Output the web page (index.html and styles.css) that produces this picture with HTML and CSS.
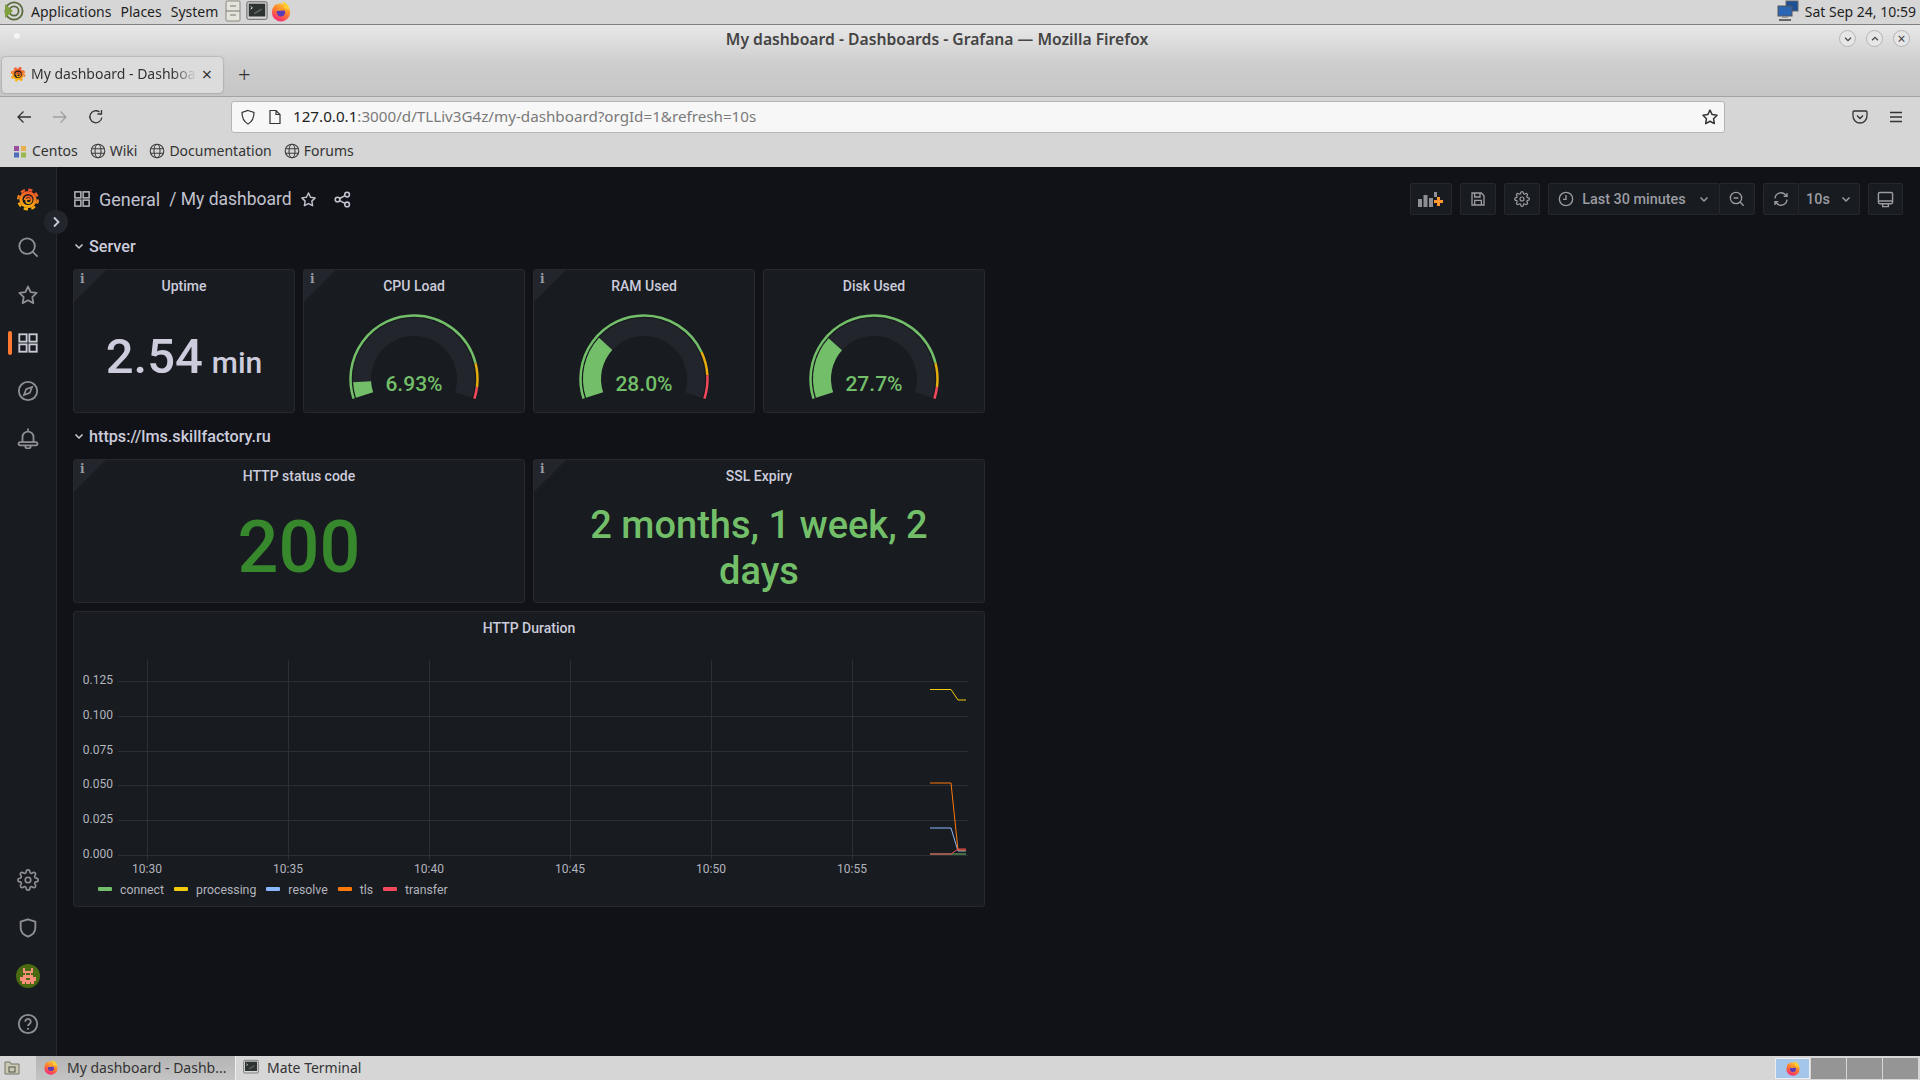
FILE: index.html
```html
<!DOCTYPE html>
<html>
<head>
    <title>My dashboard - Dashboards - Grafana</title>
    <link rel="stylesheet" href="styles.css">
</head>
<body>
    <svg class="defs" width="0" height="0">
        <defs>
            <linearGradient id="grafGrad" x1="0.6" y1="0" x2="0.4" y2="1">
                <stop offset="0" stop-color="#f0512a"/>
                <stop offset="1" stop-color="#fbb80f"/>
            </linearGradient>
            <linearGradient id="foxGrad" x1="0.8" y1="0" x2="0.3" y2="1">
                <stop offset="0" stop-color="#ffd43a"/>
                <stop offset="0.5" stop-color="#ff7a2f"/>
                <stop offset="1" stop-color="#f5267c"/>
            </linearGradient>
            <symbol id="grafana" viewBox="0 0 24 24">
                <circle cx="12" cy="12.5" r="8.6" fill="url(#grafGrad)"/>
                <circle cx="12" cy="12.5" r="9.8" fill="none" stroke="url(#grafGrad)" stroke-width="2.4" stroke-dasharray="4.2 3.5"/>
                <circle cx="12" cy="12.5" r="5.6" fill="#181b1f"/>
                <path d="M8.8 13a3.4 3.4 0 1 1 3.6 3.2 2.3 2.3 0 0 1-2-3.300 2 2 0 0 1 3.400-.2" fill="none" stroke="url(#grafGrad)" stroke-width="1.8"/>
            </symbol>
            <symbol id="firefox" viewBox="0 0 24 24">
                <circle cx="12" cy="13.5" r="10" fill="url(#foxGrad)"/>
                <path d="M14 1c3 2 7 5 7.500 10L15 9c.5-3 0-5-1-8z" fill="#ffcf2e"/>
                <path d="M2.500 10c1-3 3-5 5-5.500L7 8z" fill="#ff8a2a"/>
                <circle cx="12" cy="13.500" r="4.600" fill="#5b3bb8"/>
                <path d="M7.400 12c1-3.500 5-4.500 8-2.500l3 3.500c-1-1-3-1.500-5-1.500-2 0-4 .5-6 .5z" fill="#ff9a2a"/>
            </symbol>
            <symbol id="terminal" viewBox="0 0 24 24">
                <rect x="1" y="2" width="22" height="19" rx="1.500" fill="#d8d8d8" stroke="#555"/>
                <rect x="3" y="4" width="18" height="14" fill="#2c3331"/>
                <path d="M5 7l2 1.500L5 10" fill="none" stroke="#eee"/>
                <path d="M9 15l8-5" stroke="#59625f" stroke-width="2"/>
            </symbol>
            <symbol id="globe" viewBox="0 0 16 16">
                <g fill="none" stroke="#3d3d3d" stroke-width="1.100">
                    <circle cx="8" cy="8" r="6.800"/>
                    <ellipse cx="8" cy="8" rx="3" ry="6.800"/>
                    <path d="M1.500 5.800h13M1.500 10.200h13"/>
                </g>
            </symbol>
            <symbol id="star" viewBox="0 0 24 24">
                <path d="M12 2.800l2.900 6 6.500.9-4.700 4.600 1.100 6.500-5.800-3.100-5.800 3.100 1.100-6.500-4.700-4.600 6.500-.9z" fill="none" stroke="currentColor" stroke-width="2" stroke-linejoin="round"/>
            </symbol>
            <symbol id="grid" viewBox="0 0 24 24">
                <g fill="none" stroke="currentColor" stroke-width="2">
                    <rect x="2.500" y="2.500" width="8" height="8"/>
                    <rect x="13.500" y="2.500" width="8" height="8"/>
                    <rect x="2.500" y="13.500" width="8" height="8"/>
                    <rect x="13.500" y="13.500" width="8" height="8"/>
                </g>
            </symbol>
            <symbol id="gear" viewBox="0 0 24 24">
                <g fill="none" stroke="currentColor" stroke-width="1.800">
                    <circle cx="12" cy="12" r="3"/>
                    <path d="M19.400 15a1.650 1.650 0 0 0 .33 1.820l.06.06a2 2 0 0 1 0 2.830 2 2 0 0 1-2.830 0l-.06-.06a1.650 1.650 0 0 0-1.820-.33 1.650 1.650 0 0 0-1 1.510V21a2 2 0 0 1-2 2 2 2 0 0 1-2-2v-.09A1.650 1.650 0 0 0 9 19.400a1.650 1.650 0 0 0-1.820.33l-.06.06a2 2 0 0 1-2.830 0 2 2 0 0 1 0-2.830l.06-.06a1.650 1.650 0 0 0 .33-1.820 1.650 1.650 0 0 0-1.510-1H3a2 2 0 0 1-2-2 2 2 0 0 1 2-2h.09A1.650 1.650 0 0 0 4.600 9a1.650 1.650 0 0 0-.33-1.820l-.06-.06a2 2 0 0 1 0-2.830 2 2 0 0 1 2.830 0l.06.06a1.650 1.650 0 0 0 1.820.33H9a1.650 1.650 0 0 0 1-1.510V3a2 2 0 0 1 2-2 2 2 0 0 1 2 2v.09a1.650 1.650 0 0 0 1 1.510 1.650 1.650 0 0 0 1.820-.33l.06-.06a2 2 0 0 1 2.830 0 2 2 0 0 1 0 2.830l-.06.06a1.650 1.650 0 0 0-.33 1.820V9a1.650 1.650 0 0 0 1.510 1H21a2 2 0 0 1 2 2 2 2 0 0 1-2 2h-.09a1.650 1.650 0 0 0-1.510 1z"/>
                </g>
            </symbol>
            <symbol id="chevron" viewBox="0 0 12 12">
                <path d="M2.500 4.500L6 8l3.500-3.500" fill="none" stroke="currentColor" stroke-width="1.500"/>
            </symbol>
        </defs>
    </svg>

    <div class="top-panel">
        <svg class="mate-logo" width="20" height="20" viewBox="0 0 20 20"><g fill="none" stroke="#5a6b3c" stroke-width="1.800"><circle cx="10" cy="10" r="8.600"/><circle cx="10" cy="10" r="4.600"/></g><path d="M1 3l8 7-8 7z" fill="#7fa03c"/></svg>
        <span class="panel-menu">Applications</span>
        <span class="panel-menu">Places</span>
        <span class="panel-menu">System</span>
        <svg class="launcher-files" width="16" height="22" viewBox="0 0 16 22"><rect x="1" y="1" width="14" height="20" rx="1" fill="#e4e4dc" stroke="#8a8a80"/><path d="M1 11h14M5 6h6M5 15h6" stroke="#77776e"/></svg>
        <svg class="launcher-term" width="22" height="22"><use href="#terminal"/></svg>
        <svg class="launcher-fox" width="22" height="22"><use href="#firefox"/></svg>
        <span class="panel-spacer"></span>
        <svg class="net-icon" width="22" height="22" viewBox="0 0 22 22"><rect x="9" y="1" width="12" height="10" fill="#1d4f96" stroke="#666"/><rect x="1" y="6" width="14" height="10" fill="#2a66b5" stroke="#555"/><path d="M5 17h6" stroke="#888" stroke-width="1.500"/><path d="M2 20h12" stroke="#666" stroke-width="2"/></svg>
        <span class="panel-clock">Sat Sep 24, 10:59</span>
    </div>

    <div class="titlebar">
        <div class="title-row">
            <span class="title-dot"></span>
            <span class="window-title">My dashboard - Dashboards - Grafana — Mozilla Firefox</span>
            <div class="wm-buttons">
                <span class="wm-btn"><svg width="10" height="10"><use href="#chevron"/></svg></span>
                <span class="wm-btn wm-up"><svg width="10" height="10"><use href="#chevron"/></svg></span>
                <span class="wm-btn wm-close">×</span>
            </div>
        </div>
        <div class="tab-row">
            <div class="tab">
                <svg width="16" height="16"><use href="#grafana"/></svg>
                <span class="tab-title">My dashboard - Dashboa</span>
                <span class="tab-close">×</span>
            </div>
            <span class="new-tab">+</span>
        </div>
    </div>

    <div class="navbar">
        <svg class="nav-btn" width="16" height="16" viewBox="0 0 16 16"><path d="M15 8H2M7.500 2.500L2 8l5.500 5.500" fill="none" stroke="#333" stroke-width="1.300"/></svg>
        <svg class="nav-btn" width="16" height="16" viewBox="0 0 16 16"><path d="M1 8h13M8.500 2.500L14 8l-5.500 5.500" fill="none" stroke="#a0a0a0" stroke-width="1.300"/></svg>
        <svg class="nav-btn" width="16" height="16" viewBox="0 0 16 16"><path d="M13.800 8.500A6 6 0 1 1 11.500 3M13.500 1v4h-4" fill="none" stroke="#333" stroke-width="1.300"/></svg>
        <div class="urlbar">
            <svg width="16" height="16" viewBox="0 0 16 16"><path d="M8 1.500l6 2c0 5-1.500 9-6 11.500-4.500-2.500-6-6.500-6-11.500z" fill="none" stroke="#333" stroke-width="1.200"/></svg>
            <svg class="url-page" width="14" height="16" viewBox="0 0 14 16"><path d="M2 1.500h6l4 4v9H2zM8 1.500v4h4" fill="none" stroke="#333" stroke-width="1.200"/></svg>
            <span class="url-text"><b>127.0.0.1</b>:3000/d/TLLiv3G4z/my-dashboard?orgId=1&amp;refresh=10s</span>
            <svg class="url-star" width="18" height="18"><use href="#star"/></svg>
        </div>
        <svg class="pocket" width="16" height="16" viewBox="0 0 16 16"><path d="M2 2h12a1 1 0 0 1 1 1v4a7 7 0 0 1-14 0V3a1 1 0 0 1 1-1zM5 6.500l3 3 3-3" fill="none" stroke="#333" stroke-width="1.300"/></svg>
        <svg class="hamburger" width="14" height="14" viewBox="0 0 14 14"><path d="M1 2.500h12M1 7h12M1 11.500h12" stroke="#333" stroke-width="1.300"/></svg>
    </div>

    <div class="bookmarks">
        <span class="bookmark">
            <svg width="16" height="16" viewBox="0 0 16 16"><rect x="2" y="3" width="5" height="5" fill="#9a4f9e"/><rect x="9" y="3" width="5" height="5" fill="#e8b04a"/><rect x="2" y="9.500" width="5" height="5" fill="#4e6fb5"/><rect x="9" y="9.500" width="5" height="5" fill="#9ab84e"/></svg>
            Centos
        </span>
        <span class="bookmark"><svg width="16" height="16"><use href="#globe"/></svg>Wiki</span>
        <span class="bookmark"><svg width="16" height="16"><use href="#globe"/></svg>Documentation</span>
        <span class="bookmark"><svg width="16" height="16"><use href="#globe"/></svg>Forums</span>
    </div>

    <div class="grafana">
        <nav class="sidebar">
            <div class="side-group">
                <a class="side-item"><svg width="24" height="24"><use href="#grafana"/></svg></a>
                <a class="side-item"><svg width="22" height="22" viewBox="0 0 24 24"><path d="M11 2.500a8.500 8.500 0 1 0 0 17 8.500 8.500 0 0 0 0-17zM17.500 17.500l5 5" fill="none" stroke="currentColor" stroke-width="2"/></svg></a>
                <a class="side-item"><svg width="22" height="22"><use href="#star"/></svg></a>
                <a class="side-item active"><svg width="22" height="22"><use href="#grid"/></svg></a>
                <a class="side-item"><svg width="22" height="22" viewBox="0 0 24 24"><circle cx="12" cy="12" r="10" fill="none" stroke="currentColor" stroke-width="2"/><path d="M16.500 7.500l-2.500 6.500-6.500 2.500 2.500-6.500z" fill="none" stroke="currentColor" stroke-width="1.800"/></svg></a>
                <a class="side-item side-bell"><svg width="22" height="22" viewBox="0 0 24 24"><path d="M12 1.500v2.500M6 16v-5a6 6 0 0 1 12 0v5M3.500 16.500h17a1.500 1.500 0 0 1 0 3.500h-17a1.500 1.500 0 0 1 0-3.500zM9 20.500a3 3 0 0 0 6 0" fill="none" stroke="currentColor" stroke-width="2"/></svg></a>
            </div>
            <div class="side-group">
                <a class="side-item"><svg width="22" height="22"><use href="#gear"/></svg></a>
                <a class="side-item"><svg width="22" height="22" viewBox="0 0 24 24"><path d="M12 2.500l8 2.500v7c0 4.500-3 7.500-8 9.500-5-2-8-5-8-9.500V5z" fill="none" stroke="currentColor" stroke-width="2"/></svg></a>
                <a class="side-item">
                    <svg width="24" height="24" viewBox="0 0 24 24">
                        <circle cx="12" cy="12" r="12" fill="#4a6a12"/>
                        <path d="M7 4h2v3h6V4h2v5h-2v2h2v2h3v4h-2v3h-3v-2h-1v2h-4v-2H9v2H6v-3H4v-4h3v-2h2V9H7z" fill="#f9907c"/>
                        <path d="M10 9h4v2h-4zM10 14h4v2h-4z" fill="#4a6a12"/>
                    </svg>
                </a>
                <a class="side-item"><svg width="22" height="22" viewBox="0 0 24 24"><circle cx="12" cy="12" r="10" fill="none" stroke="currentColor" stroke-width="2"/><path d="M9 9.500a3 3 0 1 1 4.500 2.600c-1 .6-1.500 1-1.500 2.200" fill="none" stroke="currentColor" stroke-width="2"/><circle cx="12" cy="17.300" r="1.200" fill="currentColor"/></svg></a>
            </div>
            <span class="side-toggle"><svg width="12" height="12" viewBox="0 0 12 12"><path d="M4 1.500L8.500 6 4 10.500" fill="none" stroke="currentColor" stroke-width="1.800"/></svg></span>
        </nav>

        <main class="main">
            <header class="dash-header">
                <svg class="crumb-icon" width="18" height="18"><use href="#grid"/></svg>
                <span class="crumb">General</span>
                <span class="crumb crumb-sep">/ My dashboard</span>
                <svg class="head-star" width="17" height="17"><use href="#star"/></svg>
                <svg class="head-share" width="17" height="17" viewBox="0 0 24 24"><g fill="none" stroke="currentColor" stroke-width="2.200"><circle cx="18.500" cy="5" r="3.300"/><circle cx="5" cy="12" r="3.300"/><circle cx="18.500" cy="19" r="3.300"/><path d="M8 10.500l7.500-4M8 13.500l7.500 4"/></g></svg>
                <div class="toolbar">
                    <span class="tool tool-add">
                        <svg width="26" height="16" viewBox="0 0 26 16"><path d="M0 8h4v8H0zM5.500 4h4v12h-4zM11 7h4v9h-4zM16 1h3v5h-3z" fill="#8e8e95"/><path d="M16 10.500h9M20.500 6v9" stroke="#ff9830" stroke-width="3"/></svg>
                    </span>
                    <span class="tool tool-square">
                        <svg width="16" height="16" viewBox="0 0 24 24"><path d="M3 3h14l4 4v14H3zM7 3v6h8V3M7 21v-7h10v7" fill="none" stroke="currentColor" stroke-width="2"/></svg>
                    </span>
                    <span class="tool tool-square"><svg width="16" height="16"><use href="#gear"/></svg></span>
                    <div class="tool-group">
                        <span class="tool tool-time">
                            <svg width="16" height="16" viewBox="0 0 24 24"><circle cx="12" cy="12" r="10" fill="none" stroke="currentColor" stroke-width="2"/><path d="M12 6v6.500H7.500" fill="none" stroke="currentColor" stroke-width="2"/></svg>
                            <span>Last 30 minutes</span>
                            <svg class="tool-caret" width="12" height="12"><use href="#chevron"/></svg>
                        </span>
                        <span class="tool tool-square">
                            <svg width="16" height="16" viewBox="0 0 24 24"><path d="M10.500 2a8.500 8.500 0 1 0 0 17 8.500 8.500 0 0 0 0-17zM17 17l5 5M7 10.500h7" fill="none" stroke="currentColor" stroke-width="2"/></svg>
                        </span>
                    </div>
                    <div class="tool-group">
                        <span class="tool tool-square">
                            <svg width="16" height="16" viewBox="0 0 24 24"><path d="M3 11a9 9 0 0 1 15.500-5.500L21 8M21 3v5h-5M21 13a9 9 0 0 1-15.500 5.500L3 16M3 21v-5h5" fill="none" stroke="currentColor" stroke-width="2"/></svg>
                        </span>
                        <span class="tool tool-interval">
                            <span>10s</span>
                            <svg class="tool-caret" width="12" height="12"><use href="#chevron"/></svg>
                        </span>
                    </div>
                    <span class="tool tool-tv">
                        <svg width="17" height="17" viewBox="0 0 24 24"><path d="M4 2h16a2 2 0 0 1 2 2v12a2 2 0 0 1-2 2H4a2 2 0 0 1-2-2V4a2 2 0 0 1 2-2zM2 14h20M8 22h8v-4H8z" fill="none" stroke="currentColor" stroke-width="2"/></svg>
                    </span>
                </div>
            </header>

            <div class="dash">
                <div class="row-title"><svg width="12" height="12"><use href="#chevron"/></svg>Server</div>

                <section class="panel">
                    <span class="info-corner"><i>i</i></span>
                    <h2 class="panel-title">Uptime</h2>
                    <div class="panel-body stat stat-uptime">2.54<small>min</small></div>
                </section>

                <section class="panel">
                    <span class="info-corner"><i>i</i></span>
                    <h2 class="panel-title">CPU Load</h2>
                    <svg class="gauge" width="220" height="110" viewBox="0 0 220 110">
                        <path class="gauge-track" d="M60.550 93.070A52 52 0 1 1 159.450 93.070"/>
                        <path class="gauge-fill" pathLength="100" stroke-dasharray="6.930 100" d="M60.550 93.070A52 52 0 1 1 159.450 93.070"/>
                        <path class="ring ring-green" pathLength="100" stroke-dasharray="85 100" d="M49.610 96.620A63.500 63.500 0 1 1 170.390 96.620"/>
                        <path class="ring ring-yellow" pathLength="100" stroke-dasharray="10 100" stroke-dashoffset="-85" d="M49.610 96.620A63.500 63.500 0 1 1 170.390 96.620"/>
                        <path class="ring ring-red" pathLength="100" stroke-dasharray="5 100" stroke-dashoffset="-95" d="M49.610 96.620A63.500 63.500 0 1 1 170.390 96.620"/>
                        <text class="gauge-text" x="110" y="88.500">6.93%</text>
                    </svg>
                </section>

                <section class="panel">
                    <span class="info-corner"><i>i</i></span>
                    <h2 class="panel-title">RAM Used</h2>
                    <svg class="gauge" width="220" height="110" viewBox="0 0 220 110">
                        <path class="gauge-track" d="M60.550 93.070A52 52 0 1 1 159.450 93.070"/>
                        <path class="gauge-fill" pathLength="100" stroke-dasharray="28 100" d="M60.550 93.070A52 52 0 1 1 159.450 93.070"/>
                        <path class="ring ring-green" pathLength="100" stroke-dasharray="80 100" d="M49.610 96.620A63.500 63.500 0 1 1 170.390 96.620"/>
                        <path class="ring ring-yellow" pathLength="100" stroke-dasharray="10 100" stroke-dashoffset="-80" d="M49.610 96.620A63.500 63.500 0 1 1 170.390 96.620"/>
                        <path class="ring ring-red" pathLength="100" stroke-dasharray="10 100" stroke-dashoffset="-90" d="M49.610 96.620A63.500 63.500 0 1 1 170.390 96.620"/>
                        <text class="gauge-text" x="110" y="88.500">28.0%</text>
                    </svg>
                </section>

                <section class="panel">
                    <h2 class="panel-title">Disk Used</h2>
                    <svg class="gauge" width="220" height="110" viewBox="0 0 220 110">
                        <path class="gauge-track" d="M60.550 93.070A52 52 0 1 1 159.450 93.070"/>
                        <path class="gauge-fill" pathLength="100" stroke-dasharray="27.700 100" d="M60.550 93.070A52 52 0 1 1 159.450 93.070"/>
                        <path class="ring ring-green" pathLength="100" stroke-dasharray="85 100" d="M49.610 96.620A63.500 63.500 0 1 1 170.390 96.620"/>
                        <path class="ring ring-yellow" pathLength="100" stroke-dasharray="10 100" stroke-dashoffset="-85" d="M49.610 96.620A63.500 63.500 0 1 1 170.390 96.620"/>
                        <path class="ring ring-red" pathLength="100" stroke-dasharray="5 100" stroke-dashoffset="-95" d="M49.610 96.620A63.500 63.500 0 1 1 170.390 96.620"/>
                        <text class="gauge-text" x="110" y="88.500">27.7%</text>
                    </svg>
                </section>

                <div class="row-title"><svg width="12" height="12"><use href="#chevron"/></svg>https://lms.skillfactory.ru</div>

                <section class="panel span-2">
                    <span class="info-corner"><i>i</i></span>
                    <h2 class="panel-title">HTTP status code</h2>
                    <div class="panel-body stat stat-code">200</div>
                </section>

                <section class="panel span-2">
                    <span class="info-corner"><i>i</i></span>
                    <h2 class="panel-title">SSL Expiry</h2>
                    <div class="panel-body stat stat-ssl">2 months, 1 week, 2 days</div>
                </section>

                <section class="panel span-4 panel-graph">
                    <h2 class="panel-title">HTTP Duration</h2>
                    <svg class="graph" width="910" height="236" viewBox="74 644 910 236">
                        <g class="grid-lines">
                            <path d="M118 681.500H968M118 716.500H968M118 751.500H968M118 785.500H968M118 820.500H968M118 855.500H968"/>
                            <path d="M147.500 660V860M288.500 660V860M429.500 660V860M570.500 660V860M711.500 660V860M852.500 660V860"/>
                        </g>
                        <g class="y-labels">
                            <text x="113" y="684">0.125</text>
                            <text x="113" y="719">0.100</text>
                            <text x="113" y="754">0.075</text>
                            <text x="113" y="788">0.050</text>
                            <text x="113" y="823">0.025</text>
                            <text x="113" y="858">0.000</text>
                        </g>
                        <g class="x-labels">
                            <text x="147" y="873">10:30</text>
                            <text x="288" y="873">10:35</text>
                            <text x="429" y="873">10:40</text>
                            <text x="570" y="873">10:45</text>
                            <text x="711" y="873">10:50</text>
                            <text x="852" y="873">10:55</text>
                        </g>
                        <g class="series">
                            <path stroke="#73bf69" d="M930 854H951L958 854H966"/>
                            <path stroke="#f2cc0c" d="M930 689.500H951L958 700H966"/>
                            <path stroke="#8ab8ff" d="M930 828H951L958 851H966"/>
                            <path stroke="#ff780a" d="M930 783H951L958 850H966"/>
                            <path stroke="#f2495c" d="M930 854H951L958 849H966"/>
                        </g>
                    </svg>
                    <div class="legend">
                        <span class="legend-item"><i class="swatch sw-green"></i>connect</span>
                        <span class="legend-item"><i class="swatch sw-yellow"></i>processing</span>
                        <span class="legend-item"><i class="swatch sw-blue"></i>resolve</span>
                        <span class="legend-item"><i class="swatch sw-orange"></i>tls</span>
                        <span class="legend-item"><i class="swatch sw-red"></i>transfer</span>
                    </div>
                </section>
            </div>
        </main>
    </div>

    <div class="taskbar">
        <svg class="show-desktop" width="16" height="16" viewBox="0 0 16 16"><path d="M1 2h5l1 2h8v10H1z" fill="#c9c9b4" stroke="#77776a"/><rect x="5" y="7" width="6" height="5" fill="none" stroke="#55554a"/></svg>
        <span class="task-handle"></span>
        <div class="task task-active">
            <svg width="16" height="16"><use href="#firefox"/></svg>
            <span>My dashboard - Dashb...</span>
        </div>
        <div class="task">
            <svg width="16" height="16"><use href="#terminal"/></svg>
            <span>Mate Terminal</span>
        </div>
        <span class="panel-spacer"></span>
        <div class="workspaces">
            <span class="ws ws-active"><svg width="16" height="16"><use href="#firefox"/></svg></span>
            <span class="ws"></span>
            <span class="ws"></span>
            <span class="ws"></span>
        </div>
    </div>
</body>
</html>
```

FILE: styles.css
```css
* {
    box-sizing: border-box;
}
body {
    margin: 0;
    width: 1920px;
    height: 1080px;
    overflow: hidden;
    display: flex;
    flex-direction: column;
    font-family: "Noto Sans", sans-serif;
    color: #2e2e2e;
    background: #d6d6d6;
}
svg {
    display: block;
    flex-shrink: 0;
}
.defs {
    position: absolute;
}

/* desktop panel */
.top-panel {
    height: 25px;
    display: flex;
    align-items: center;
    background: #d6d6d6;
    border-bottom: 1px solid #7f7f7f;
    padding: 0 4px 2px;
    font-size: 14px;
    color: #1f1f1f;
}
.mate-logo {
    margin-right: 7px;
}
.panel-menu {
    margin-right: 9px;
}
.launcher-files {
    margin-left: -2px;
}
.launcher-term {
    margin-left: 5px;
}
.launcher-fox {
    margin-left: 2px;
}
.panel-spacer {
    flex: 1;
}
.net-icon {
    margin-right: 6px;
}

/* firefox window */
.titlebar {
    height: 72px;
    background: linear-gradient(#e8e8e8, #cdcdcd 55%, #c6c6c6);
    border-bottom: 1px solid #a3a3a3;
}
.title-row {
    height: 28px;
    position: relative;
    display: flex;
    align-items: center;
    justify-content: center;
}
.title-dot {
    position: absolute;
    left: 14px;
    top: 8px;
    width: 6px;
    height: 6px;
    border-radius: 50%;
    background: #f4f4f4;
}
.window-title {
    font-size: 15.700px;
    font-weight: 600;
    color: #444;
    margin-left: -46px;
}
.wm-buttons {
    position: absolute;
    right: 10px;
    top: 5px;
    display: flex;
    gap: 10px;
}
.wm-btn {
    width: 17px;
    height: 17px;
    border-radius: 50%;
    border: 1px solid #b5b5b5;
    background: #e6e6e6;
    color: #444;
    display: flex;
    align-items: center;
    justify-content: center;
    font-size: 14px;
    line-height: 1;
}
.wm-up svg {
    transform: rotate(180deg);
}
.tab-row {
    height: 43px;
    display: flex;
    align-items: center;
    padding-left: 2px;
}
.tab {
    width: 221px;
    height: 36px;
    background: #dcdcdc;
    border-radius: 4px;
    box-shadow: 0 0 2px rgba(0, 0, 0, 0.4);
    display: flex;
    align-items: center;
    padding: 0 11px 2px 8px;
    gap: 5px;
    font-size: 14px;
    color: #333;
}
.tab-title {
    flex: 1;
    overflow: hidden;
    white-space: nowrap;
    -webkit-mask-image: linear-gradient(to right, #000 85%, transparent);
    mask-image: linear-gradient(to right, #000 85%, transparent);
}
.tab-close {
    font-size: 18px;
    line-height: 1;
    color: #333;
}
.new-tab {
    margin-left: 15px;
    margin-bottom: 2px;
    font-size: 22px;
    font-weight: 300;
    line-height: 1;
    color: #333;
}
.navbar {
    height: 40px;
    display: flex;
    align-items: center;
    background: #d6d6d6;
    padding: 0 16px;
}
.nav-btn {
    margin-right: 20px;
}
.nav-btn:nth-child(3) {
    margin-right: 0;
}
.urlbar {
    width: 1494px;
    height: 32px;
    margin-left: 127px;
    background: #f7f7f7;
    border: 1px solid #b5b5b5;
    border-radius: 3px;
    display: flex;
    align-items: center;
    padding: 0 5px 0 8px;
    font-size: 15.200px;
    color: #7a7a7a;
}
.url-page {
    margin-left: 12px;
}
.url-text {
    margin-left: 11px;
    margin-bottom: 2px;
    flex: 1;
}
.url-text b {
    font-weight: 400;
    color: #222;
}
.url-star {
    color: #333;
}
.pocket {
    margin-left: 127px;
}
.hamburger {
    margin-left: 21px;
}
.bookmarks {
    height: 30px;
    display: flex;
    align-items: center;
    padding: 0 0 3px 12px;
    gap: 12px;
    font-size: 14px;
    background: #d6d6d6;
    color: #333;
}
.bookmark {
    display: flex;
    align-items: center;
    gap: 4px;
}

/* grafana */
.grafana {
    flex: 1;
    display: flex;
    min-height: 0;
    background: #111217;
    font-family: Roboto, sans-serif;
    color: #ccccdc;
}
.sidebar {
    width: 57px;
    background: #181b1f;
    border-right: 1px solid #26282d;
    display: flex;
    flex-direction: column;
    justify-content: space-between;
    padding: 8px 0;
    position: relative;
}
.side-item {
    height: 48px;
    display: flex;
    align-items: center;
    justify-content: center;
    color: #8e8f97;
    position: relative;
}
.side-item.active {
    color: #c8c9d4;
}
.side-item.active::before {
    content: "";
    position: absolute;
    left: 8px;
    top: 12px;
    width: 4px;
    height: 24px;
    border-radius: 2px;
    background: #ff7a30;
}
.side-bell svg {
    margin-top: -2px;
}
.side-toggle {
    position: absolute;
    left: 44px;
    top: 43px;
    width: 24px;
    height: 24px;
    border-radius: 50%;
    background: #22252b;
    display: flex;
    align-items: center;
    justify-content: center;
    color: #ccccdc;
    z-index: 1;
}
.main {
    flex: 1;
    padding: 16px 17px 0 16px;
}
.dash-header {
    height: 32px;
    display: flex;
    align-items: center;
}
.crumb-icon {
    color: #b5b6bf;
    margin-right: 8px;
}
.crumb {
    font-size: 18px;
    color: #c2c3cf;
}
.crumb-sep {
    font-size: 17.500px;
    margin-left: 9px;
}
.head-star {
    margin-left: 8px;
    color: #c2c3cf;
}
.head-share {
    margin-left: 17px;
    color: #c2c3cf;
}
.toolbar {
    margin-left: auto;
    display: flex;
    gap: 8px;
}
.tool {
    height: 32px;
    display: flex;
    align-items: center;
    justify-content: center;
    background: #181b1f;
    border: 1px solid #25272c;
    border-radius: 2px;
    color: #9b9ca3;
    font-size: 14.400px;
    font-weight: 500;
}
.tool-add {
    width: 42px;
}
.tool-square {
    width: 36px;
}
.tool-tv {
    width: 35px;
}
.tool-group {
    display: flex;
}
.tool-group .tool + .tool {
    margin-left: -1px;
}
.tool-time {
    width: 172px;
    gap: 8px;
}
.tool-interval {
    width: 62px;
    gap: 6px;
}
.tool-caret {
    margin-left: 4px;
}
.dash {
    width: 912px;
    margin-top: 16px;
    display: grid;
    grid-template-columns: repeat(4, 1fr);
    gap: 8px;
}
.row-title {
    grid-column: span 4;
    height: 30px;
    display: flex;
    align-items: center;
    gap: 4px;
    font-size: 16.200px;
    font-weight: 500;
    color: #ccccdc;
}
.panel {
    height: 144px;
    background: #181b1f;
    border: 1px solid #26282d;
    border-radius: 3px;
    position: relative;
    display: flex;
    flex-direction: column;
}
.span-2 {
    grid-column: span 2;
}
.span-4 {
    grid-column: span 4;
}
.panel-title {
    margin: 0;
    height: 32px;
    flex-shrink: 0;
    display: flex;
    align-items: center;
    justify-content: center;
    font-size: 14px;
    font-weight: 500;
    color: #ccccdc;
}
.info-corner {
    position: absolute;
    left: 0;
    top: 0;
    width: 0;
    height: 0;
    border-top: 32px solid #22252b;
    border-right: 32px solid transparent;
}
.info-corner i {
    position: absolute;
    left: 6px;
    top: -30px;
    font: 700 12px "DejaVu Serif", serif;
    color: #9b9ca3;
}
.panel-body {
    flex: 1;
    display: flex;
    align-items: center;
    justify-content: center;
    text-align: center;
}
.stat {
    font-weight: 500;
}
.stat-uptime {
    font-size: 49px;
    color: #ccccdc;
    align-items: baseline;
    padding-top: 26px;
}
.stat-uptime small {
    font-size: 30px;
    margin-left: 9px;
}
.stat-code {
    font-size: 72px;
    color: #37872d;
}
.stat-ssl {
    font-size: 38px;
    line-height: 46px;
    color: #73bf69;
    padding: 2px 40px 0;
}

/* gauges */
.gauge-track,
.gauge-fill,
.ring {
    fill: none;
}
.gauge-track,
.gauge-fill {
    stroke-width: 18;
}
.gauge-track {
    stroke: #22252b;
}
.gauge-fill {
    stroke: #73bf69;
}
.ring {
    stroke-width: 2.500;
}
.ring-green {
    stroke: #73bf69;
}
.ring-yellow {
    stroke: #e5ac0e;
}
.ring-red {
    stroke: #f2495c;
}
.gauge-text {
    font-size: 21px;
    font-weight: 500;
    fill: #73bf69;
    text-anchor: middle;
}

/* graph */
.panel-graph {
    height: 296px;
}
.grid-lines path {
    fill: none;
    stroke: #2c2f34;
    stroke-width: 1;
}
.y-labels text,
.x-labels text {
    font-size: 12px;
    fill: #b3b4be;
}
.y-labels text {
    text-anchor: end;
}
.x-labels text {
    text-anchor: middle;
}
.series path {
    fill: none;
    stroke-width: 1;
}
.legend {
    height: 20px;
    display: flex;
    align-items: center;
    padding-left: 24px;
    gap: 10px;
    font-size: 12.300px;
    color: #b3b4be;
}
.legend-item {
    display: flex;
    align-items: center;
    gap: 8px;
}
.swatch {
    width: 14px;
    height: 4px;
    border-radius: 1px;
    margin-top: -3px;
}
.sw-green {
    background: #73bf69;
}
.sw-yellow {
    background: #f2cc0c;
}
.sw-blue {
    background: #8ab8ff;
}
.sw-orange {
    background: #ff780a;
}
.sw-red {
    background: #f2495c;
}

/* bottom panel */
.taskbar {
    height: 24px;
    display: flex;
    align-items: center;
    background: #d6d6d6;
    padding-left: 4px;
    font-size: 14px;
    color: #333;
}
.task-handle {
    width: 16px;
}
.task {
    height: 24px;
    width: 200px;
    display: flex;
    align-items: center;
    gap: 8px;
    padding: 0 0 2px 7px;
    white-space: nowrap;
}
.task-active {
    background: linear-gradient(#b4b4b4, #c4c4c4);
    border-right: 1px solid #eee;
}
.workspaces {
    display: flex;
    gap: 1px;
    margin-right: 2px;
    height: 21px;
}
.ws {
    width: 35px;
    background: #959595;
    display: flex;
    align-items: center;
    justify-content: center;
}
.ws-active {
    background: #a4c6ea;
    border: 1px solid #eee;
}
```
